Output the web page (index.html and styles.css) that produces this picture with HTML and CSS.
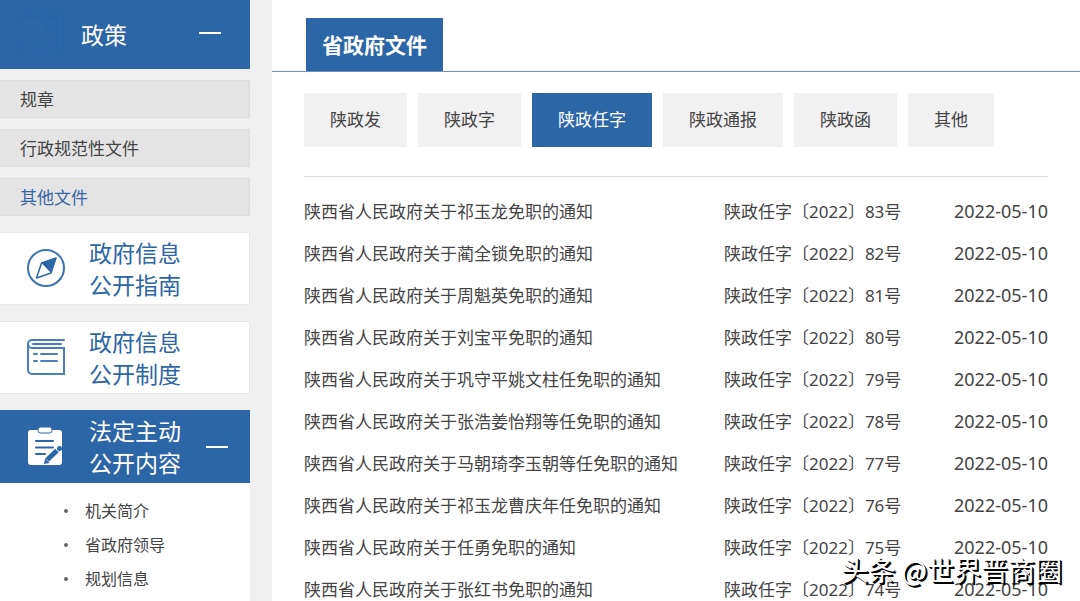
FILE: index.html
```html
<!DOCTYPE html>
<html lang="zh-CN">
<head>
<meta charset="utf-8">
<meta name="viewport" content="width=device-width, initial-scale=1">
<title>省政府文件</title>
<link rel="stylesheet" href="styles.css">
</head>
<body>
<div class="page">
  <aside class="sidebar">
    <nav class="policy">
      <button class="policy-head" type="button" aria-expanded="true">
        <svg class="ghost-icon" width="44" height="50" viewBox="0 0 44 50" aria-hidden="true">
          <path d="M7 7V1h35v41h-5M1 7h36v41H1zM1 35h36M1 41h36M26 2v20l5-5 5 5V2"/>
        </svg>
        <span class="policy-title">政策</span>
        <span class="minus"></span>
      </button>
      <a class="policy-link" href="#">规章</a>
      <a class="policy-link" href="#">行政规范性文件</a>
      <a class="policy-link current" href="#">其他文件</a>
    </nav>
    <nav class="cards">
      <a class="card" href="#">
        <svg class="card-icon" width="40" height="40" viewBox="0 0 40 40" aria-hidden="true">
          <circle cx="20" cy="19" r="18" fill="none" stroke="#3d74b2" stroke-width="2"/>
          <path d="M30 9 15.500 14 10.500 29 25 24z" fill="#fff" stroke="#2c66a6" stroke-width="1.500" stroke-linejoin="round"/>
          <path d="M30 9 15.500 14 25 24z" fill="#2c66a6"/>
        </svg>
        <span>政府信息<br>公开指南</span>
      </a>
      <a class="card" href="#">
        <svg class="card-icon" width="40" height="40" viewBox="0 0 40 40" aria-hidden="true">
          <g fill="none" stroke="#4a7fbb" stroke-width="2" stroke-linecap="round">
            <path d="M38 2H6a4 4 0 0 0 0 8h32v26H6a4 4 0 0 1-4-4V6"/>
            <path d="M7 6h28M8 16h3M15 16h16M8 23h3M15 23h16"/>
          </g>
        </svg>
        <span>政府信息<br>公开制度</span>
      </a>
      <button class="card active" type="button" aria-expanded="true">
        <svg class="card-icon" width="40" height="40" viewBox="0 0 40 40" aria-hidden="true">
          <rect x="2" y="3" width="34" height="35" rx="3" fill="#fff"/>
          <rect x="12" y="0" width="14" height="6" rx="2.500" fill="#fff" stroke="#2c66a6"/>
          <path d="M10 14h17M10 20.500h17M10 27h9" stroke="#2c66a6" stroke-width="2" stroke-linecap="round"/>
          <path d="M21 33 31 23.500" stroke="#2c66a6" stroke-width="5"/>
          <path d="M18 37l1-5.500 4.500 4.500z" fill="#2c66a6"/>
          <circle cx="33.500" cy="21.500" r="2.500" fill="#2c66a6"/>
        </svg>
        <span>法定主动<br>公开内容</span>
        <span class="minus"></span>
      </button>
    </nav>
    <ul class="sublist">
      <li><a href="#">机关简介</a></li>
      <li><a href="#">省政府领导</a></li>
      <li><a href="#">规划信息</a></li>
    </ul>
  </aside>
  <main class="main">
    <header class="main-head"><h1 class="main-title">省政府文件</h1></header>
    <div class="content">
      <nav class="tabs">
        <button class="tab" type="button">陕政发</button>
        <button class="tab" type="button">陕政字</button>
        <button class="tab selected" type="button">陕政任字</button>
        <button class="tab" type="button">陕政通报</button>
        <button class="tab" type="button">陕政函</button>
        <button class="tab" type="button">其他</button>
      </nav>
      <div class="docs-wrap">
      <table class="docs">
        <tbody>
          <tr><td><a href="#">陕西省人民政府关于祁玉龙免职的通知</a></td><td class="number">陕政任字〔2022〕83号</td><td class="date">2022-05-10</td></tr>
          <tr><td><a href="#">陕西省人民政府关于蔺全锁免职的通知</a></td><td class="number">陕政任字〔2022〕82号</td><td class="date">2022-05-10</td></tr>
          <tr><td><a href="#">陕西省人民政府关于周魁英免职的通知</a></td><td class="number">陕政任字〔2022〕81号</td><td class="date">2022-05-10</td></tr>
          <tr><td><a href="#">陕西省人民政府关于刘宝平免职的通知</a></td><td class="number">陕政任字〔2022〕80号</td><td class="date">2022-05-10</td></tr>
          <tr><td><a href="#">陕西省人民政府关于巩守平姚文柱任免职的通知</a></td><td class="number">陕政任字〔2022〕79号</td><td class="date">2022-05-10</td></tr>
          <tr><td><a href="#">陕西省人民政府关于张浩姜怡翔等任免职的通知</a></td><td class="number">陕政任字〔2022〕78号</td><td class="date">2022-05-10</td></tr>
          <tr><td><a href="#">陕西省人民政府关于马朝琦李玉朝等任免职的通知</a></td><td class="number">陕政任字〔2022〕77号</td><td class="date">2022-05-10</td></tr>
          <tr><td><a href="#">陕西省人民政府关于祁玉龙曹庆年任免职的通知</a></td><td class="number">陕政任字〔2022〕76号</td><td class="date">2022-05-10</td></tr>
          <tr><td><a href="#">陕西省人民政府关于任勇免职的通知</a></td><td class="number">陕政任字〔2022〕75号</td><td class="date">2022-05-10</td></tr>
          <tr><td><a href="#">陕西省人民政府关于张红书免职的通知</a></td><td class="number">陕政任字〔2022〕74号</td><td class="date">2022-05-10</td></tr>
        </tbody>
      </table>
      </div>
    </div>
  </main>
  <div class="watermark">头条 @世界晋商圈</div>
</div>
</body>
</html>
```
FILE: styles.css
```css
* { box-sizing: border-box; }

body {
  margin: 0;
  background: #f0f0f0;
  color: #444;
  font-family: "Noto Sans", "Noto Sans CJK SC", sans-serif;
  font-size: 17px;
  line-height: 24px;
}

a { color: inherit; text-decoration: none; }
button { border: 0; font: inherit; text-align: left; cursor: pointer; }

.page {
  position: relative;
  display: flex;
  gap: 22px;
  height: 100vh;
  overflow: hidden;
}

.sidebar {
  flex: 0 0 250px;
  display: flex;
  flex-direction: column;
  gap: 16px;
}

.policy { display: flex; flex-direction: column; gap: 11px; }

.policy-head {
  display: flex;
  align-items: center;
  height: 69px;
  padding: 0 29px 0 20px;
  background: #2c66a6;
  color: #fff;
  font-size: 23px;
}

.ghost-icon { fill: none; stroke: #2a64a8; stroke-width: 2; }
.policy-title { margin-left: 17px; }

.minus {
  width: 22px;
  height: 2px;
  margin-left: auto;
  background: #fff;
}

.policy-head .minus { margin-bottom: 4px; }

.policy-link {
  height: 38px;
  padding: 7px 20px;
  border: 1px solid #dcdcdc;
  border-left: 0;
  background: #e4e4e4;
}

.policy-link.current { color: #3565a5; }

.cards { display: flex; flex-direction: column; gap: 16px; }

.card {
  display: flex;
  align-items: center;
  gap: 23px;
  height: 73px;
  padding: 0 21px 0 26px;
  border: 1px solid #e8e8e8;
  border-left: 0;
  background: #fff;
  color: #2c66a6;
  font-size: 23px;
  line-height: 32px;
}

.card.active {
  border-color: #2c66a6;
  background: #2c66a6;
  color: #fff;
}

.card-icon { flex: none; }

.sublist {
  flex: 1;
  margin: -16px 0 0;
  padding: 11px 0 0 85px;
  background: #fff;
  list-style: none;
  font-size: 16px;
  line-height: 34px;
}

.sublist li { display: flex; align-items: center; }

.sublist li::before {
  content: "";
  width: 4px;
  height: 4px;
  margin-left: -21px;
  margin-right: 17px;
  border-radius: 50%;
  background: #666;
}

.main { flex: 1; min-width: 0; background: #fff; }

.main-head {
  padding: 18px 34px 0;
  border-bottom: 1px solid #6f94c0;
}

.main-title {
  width: fit-content;
  margin: 0;
  padding: 2px 16px 0;
  background: #2c66a6;
  color: #fff;
  font-size: 21px;
  font-weight: 700;
  line-height: 51px;
}

.content { padding: 21px 32px 0; }
.tabs { display: flex; gap: 11px; }

.tab {
  padding: 15px 26px;
  background: #f1f1f1;
  color: #444;
}

.tab.selected { background: #2c66a6; color: #fff; }

.docs-wrap {
  margin-top: 29px;
  padding-top: 14px;
  border-top: 1px solid #ddd;
}

.docs { width: 100%; border-collapse: collapse; }
.docs td { height: 42px; padding: 0; white-space: nowrap; }
.docs .number { width: 200px; }
.docs .date { width: 124px; padding-bottom: 2px; font-size: 18px; text-align: right; }

.watermark {
  position: absolute;
  right: 18px;
  bottom: 12px;
  color: #fff;
  font-family: "Noto Sans CJK SC", sans-serif;
  font-size: 27px;
  line-height: 38px;
  text-shadow: 1px 1px 0 #000, 2px 2px 0 #000;
}
```
